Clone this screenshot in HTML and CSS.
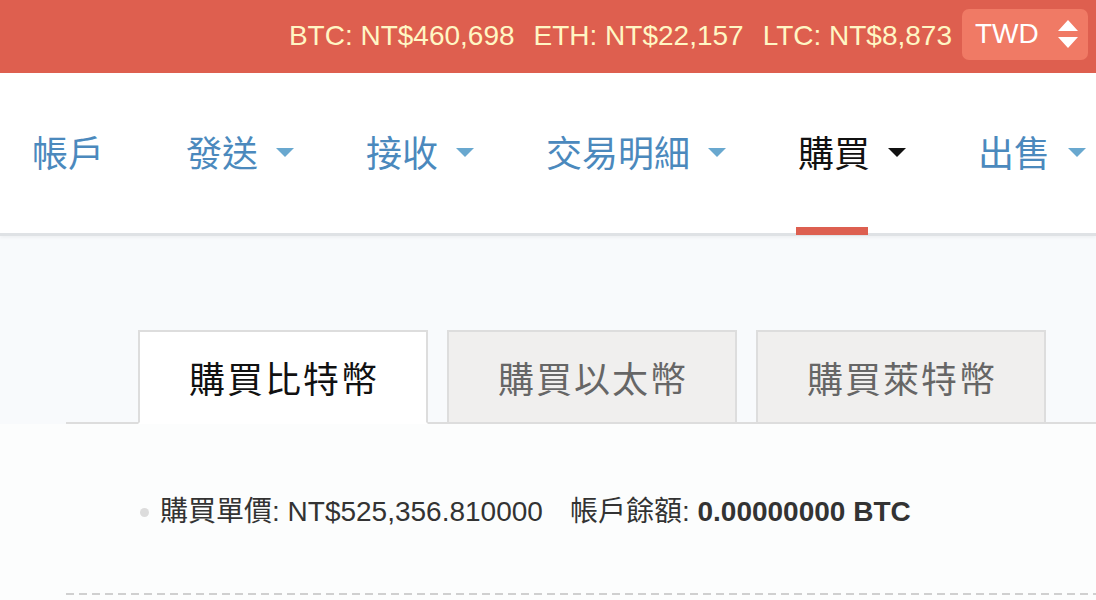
FILE: index.html
```html
<!DOCTYPE html>
<html lang="zh-Hant">
<head>
<meta charset="utf-8">
<title>購買</title>
<link rel="stylesheet" href="styles.css">
</head>
<body>
<header class="ticker">
  <span class="price">BTC: NT$460,698</span>
  <span class="price">ETH: NT$22,157</span>
  <span class="price">LTC: NT$8,873</span>
  <div class="currency">
    <span>TWD</span>
    <svg class="updown" width="20" height="30" viewBox="0 0 20 30"><path d="M10 1 L20 12 L0 12 Z M0 18 L20 18 L10 29 Z" fill="#fff"/></svg>
  </div>
</header>
<nav class="nav">
  <a class="nav-item first"><span class="label">帳戶</span></a>
  <a class="nav-item"><span class="label">發送</span><i class="caret"></i></a>
  <a class="nav-item"><span class="label">接收</span><i class="caret"></i></a>
  <a class="nav-item"><span class="label">交易明細</span><i class="caret"></i></a>
  <a class="nav-item active"><span class="label">購買</span><i class="caret"></i></a>
  <a class="nav-item"><span class="label">出售</span><i class="caret"></i></a>
</nav>
<main class="main">
  <div class="tabs-area">
    <div class="tabs">
      <div class="tab active">購買比特幣</div>
      <div class="tab">購買以太幣</div>
      <div class="tab">購買萊特幣</div>
    </div>
  </div>
  <section class="pane">
    <ul class="info">
      <li><span>購買單價: NT$525,356.810000</span><span class="bal">帳戶餘額: <b>0.00000000 BTC</b></span></li>
    </ul>
    <div class="dashed"></div>
  </section>
</main>
</body>
</html>
```
FILE: styles.css
```css
* { box-sizing: border-box; }
html, body { margin: 0; padding: 0; }
body {
  width: 1096px;
  height: 600px;
  overflow: hidden;
  background: #f8fafc;
  font-family: "Liberation Sans", "Noto Sans CJK TC", sans-serif;
}
.ticker {
  height: 73px;
  background: #de5f4f;
  display: flex;
  align-items: center;
  justify-content: flex-end;
  padding-right: 8px;
  gap: 19px;
  color: #fff6c4;
  font-size: 28px;
}
.price { margin-top: -2px; }
.currency {
  margin-left: -9px;
  width: 126px;
  height: 51px;
  margin-top: -5px;
  background: #f07a65;
  border-radius: 7px;
  display: flex;
  align-items: center;
  padding-left: 13px;
  color: #fff;
}
.updown { margin-left: 19px; }
.nav {
  height: 163px;
  background: #fff;
  border-bottom: 3px solid #dfe2e5;
  box-shadow: 0 2px 3px rgba(0,0,0,0.04);
  display: flex;
  align-items: stretch;
  padding-left: 32px;
  padding-bottom: 4px;
  gap: 72px;
  font-family: "Noto Sans CJK TC", "Liberation Sans", sans-serif;
  font-size: 36px;
  color: #4b89bd;
  position: relative;
}
.nav-item {
  display: flex;
  align-items: center;
  position: relative;
  white-space: nowrap;
}
.nav-item.first { margin-right: 10px; }
.label { position: relative; line-height: 1; }
.caret {
  display: inline-block;
  width: 0; height: 0;
  margin-left: 18px;
  margin-top: 2px;
  border-left: 9px solid transparent;
  border-right: 9px solid transparent;
  border-top: 9px solid #69a8cf;
}
.nav-item.active { color: #111; }
.nav-item.active .caret { border-top-color: #111; }
.nav-item.active .label::after {
  content: "";
  position: absolute;
  left: -2px;
  width: 72px;
  height: 8px;
  top: 94px;
  background: #dd5f50;
}
.tabs-area { padding: 94px 0 0 66px; }
.tabs {
  display: flex;
  gap: 19px;
  padding-left: 72px;
  border-bottom: 2px solid #dddddd;
}
.tab {
  width: 290px;
  height: 94px;
  margin-bottom: -2px;
  border: 2px solid #dddddd;
  background: #f0efee;
  display: flex;
  align-items: center;
  justify-content: center;
  padding-left: 2px;
  font-family: "Noto Sans CJK TC", "Liberation Sans", sans-serif;
  font-size: 36px;
  letter-spacing: 2px;
  color: #666;
}
.tab.active {
  background: #fff;
  color: #111;
  border-bottom-color: #fff;
}
.pane {
  background: #fcfdfd;
  height: 200px;
  padding-left: 66px;
}
.info {
  margin: 0;
  padding: 68px 0 0 94px;
  list-style: none;
  font-size: 28px;
  color: #333;
  line-height: 40px;
}
.info li { position: relative; white-space: nowrap; }
.info li::before {
  content: "";
  position: absolute;
  left: -20px;
  top: 16px;
  width: 9px;
  height: 9px;
  border-radius: 50%;
  background: #dcdcdc;
}
.bal { margin-left: 27px; }
.info b { font-weight: bold; color: #333; }
.dashed {
  margin-top: 61px;
  height: 2px;
  background: repeating-linear-gradient(to right, #d0d0d0 0 8px, transparent 8px 13px);
}
```
